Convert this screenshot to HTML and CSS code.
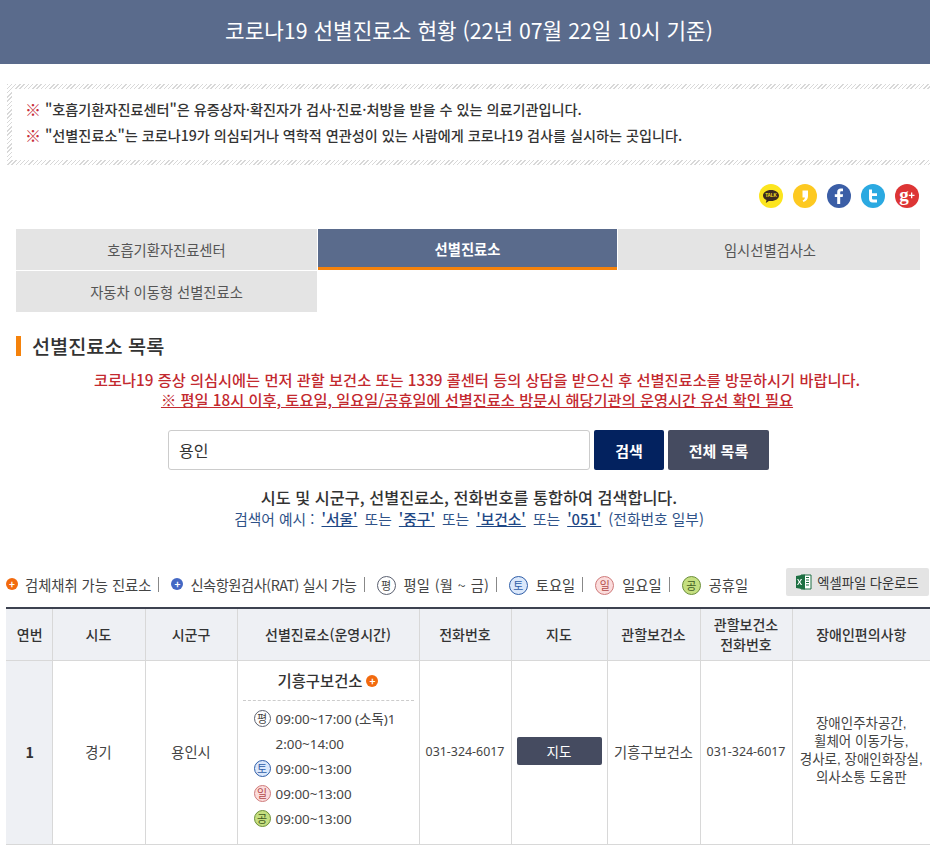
FILE: index.html
```html
<!DOCTYPE html>
<html lang="ko">
<head>
<meta charset="utf-8">
<title>코로나19 선별진료소 현황</title>
<link rel="stylesheet" href="styles.css">
</head>
<body>
<header class="top"><h1>코로나19 선별진료소 현황 (22년 07월 22일 10시 기준)</h1></header>
<section class="notice">
  <div class="notice-inner">
    <p><span class="mark">※</span>"호흡기환자진료센터"은 유증상자·확진자가 검사·진료·처방을 받을 수 있는 의료기관입니다.</p>
    <p><span class="mark">※</span>"선별진료소"는 코로나19가 의심되거나 역학적 연관성이 있는 사람에게 코로나19 검사를 실시하는 곳입니다.</p>
  </div>
</section>
<div class="share">
  <svg class="sns" viewBox="0 0 24 24"><circle cx="12" cy="12" r="12" fill="#fce51e"/><path d="M12 6c-4.600 0-8 2.500-8 5.500 0 2 1.400 3.700 3.500 4.600l-.7 3 3.100-2.200c.7.100 1.400.1 2.100.1 4.600 0 8-2.500 8-5.500S16.600 6 12 6z" fill="#3c2a20"/><text x="12" y="13.400" class="talk">TALK</text></svg>
  <svg class="sns" viewBox="0 0 24 24"><circle cx="12" cy="12" r="12" fill="#fdc921"/><path d="M9.500 6.500h5.500v5.500c0 2.800-1.500 5-4.500 6l-.9-1.600c1.500-.7 2.200-1.700 2.300-3h-2.400z" fill="#fff"/></svg>
  <svg class="sns" viewBox="0 0 24 24"><circle cx="12" cy="12" r="12" fill="#3b5ea6"/><path d="M13.200 20v-7h2.500l.4-2.800h-2.900V8.500c0-.8.300-1.300 1.400-1.300H16V4.700c-.3 0-1.200-.1-2.200-.1-2.200 0-3.600 1.300-3.600 3.700v1.900H7.800V13h2.400v7z" fill="#fff"/></svg>
  <svg class="sns" viewBox="0 0 24 24"><circle cx="12" cy="12" r="12" fill="#2ba9e1"/><path d="M8 5.500h3v3.700h5v2.800h-5v2c0 1 .6 1.500 1.500 1.500H16V18.500h-4.500C9.300 18.500 8 17 8 14.800z" fill="#fff"/></svg>
  <svg class="sns" viewBox="0 0 24 24"><circle cx="12" cy="12" r="12" fill="#dd3535"/><text x="9" y="16.500" class="gplus">g</text><path d="M16 8.500h1.300v2.200h2.200V12h-2.200v2.200H16V12h-2.200v-1.300H16z" fill="#fff"/></svg>
</div>
<nav class="tabs">
  <a class="tab">호흡기환자진료센터</a>
  <a class="tab active">선별진료소</a>
  <a class="tab">임시선별검사소</a>
  <a class="tab">자동차 이동형 선별진료소</a>
</nav>
<h2 class="section-title">선별진료소 목록</h2>
<div class="warn">
  <p>코로나19 증상 의심시에는 먼저 관할 보건소 또는 1339 콜센터 등의 상담을 받으신 후 선별진료소를 방문하시기 바랍니다.</p>
  <p><u>※ 평일 18시 이후, 토요일, 일요일/공휴일에 선별진료소 방문시 해당기관의 운영시간 유선 확인 필요</u></p>
</div>
<form class="search">
  <input class="search-input" type="text" value="용인">
  <button class="btn btn-navy" type="button">검색</button>
  <button class="btn btn-slate" type="button">전체 목록</button>
</form>
<div class="hint">
  <p class="hint-main">시도 및 시군구, 선별진료소, 전화번호를 통합하여 검색합니다.</p>
  <p class="hint-sub">검색어 예시 : <a>'서울'</a> 또는 <a>'중구'</a> 또는 <a>'보건소'</a> 또는 <a>'051'</a> (전화번호 일부)</p>
</div>
<div class="legend">
  <div class="legend-items">
    <span class="dot dot-orange">+</span><span class="lg-text">검체채취 가능 진료소</span><i class="sep"></i>
    <span class="dot dot-blue">+</span><span class="lg-text tight">신속항원검사(RAT) 실시 가능</span><i class="sep"></i>
    <span class="day day-w lg-day">평</span><span class="lg-text wide">평일 (월 ~ 금)</span><i class="sep"></i>
    <span class="day day-s lg-day">토</span><span class="lg-text">토요일</span><i class="sep"></i>
    <span class="day day-u lg-day">일</span><span class="lg-text">일요일</span><i class="sep"></i>
    <span class="day day-h lg-day">공</span><span class="lg-text">공휴일</span>
  </div>
  <a class="excel">
    <svg class="xl" viewBox="0 0 16 16"><path d="M5 1h10v14H5z" fill="#fff" stroke="#1d6f42"/><path d="M10 3.500h3M10 6h3M10 8.500h3M10 11h3" stroke="#1d6f42"/><path d="M0 2l9-1.500v15L0 14z" fill="#1d6f42"/><path d="M2.300 5l1.200 2.200L4.800 5h1.300L4.200 8l1.900 3H4.800L3.500 8.800 2.200 11H1L2.800 8 1.100 5z" fill="#fff"/></svg>
    엑셀파일 다운로드
  </a>
</div>
<table class="list">
  <colgroup>
    <col class="c1"><col class="c2"><col class="c3"><col class="c4"><col class="c5"><col class="c6"><col class="c7"><col class="c8"><col class="c9">
  </colgroup>
  <thead>
    <tr><th>연번</th><th>시도</th><th>시군구</th><th>선별진료소(운영시간)</th><th>전화번호</th><th>지도</th><th>관할보건소</th><th>관할보건소<br>전화번호</th><th>장애인편의사항</th></tr>
  </thead>
  <tbody>
    <tr>
      <th class="num">1</th>
      <td>경기</td>
      <td>용인시</td>
      <td class="clinic">
        <div class="clinic-name">기흥구보건소<span class="dot dot-orange name-dot">+</span></div>
        <div class="hours">
          <div class="hour"><span class="day day-w">평</span><span class="hour-text">09:00~17:00 (소독)12:00~14:00</span></div>
          <div class="hour"><span class="day day-s">토</span><span class="hour-text">09:00~13:00</span></div>
          <div class="hour"><span class="day day-u">일</span><span class="hour-text">09:00~13:00</span></div>
          <div class="hour"><span class="day day-h">공</span><span class="hour-text">09:00~13:00</span></div>
        </div>
      </td>
      <td class="phone">031-324-6017</td>
      <td><a class="map-btn">지도</a></td>
      <td>기흥구보건소</td>
      <td class="phone">031-324-6017</td>
      <td class="access">장애인주차공간,<br>휠체어 이동가능,<br>경사로, 장애인화장실,<br>의사소통 도움판</td>
    </tr>
  </tbody>
</table>
</body>
</html>
```

FILE: styles.css
```css
* { box-sizing: border-box; }
html, body { margin: 0; padding: 0; }
body {
  width: 930px;
  height: 845px;
  overflow: hidden;
  background: #fff;
  color: #333;
  font-family: "Noto Sans CJK KR", "Noto Sans", sans-serif;
  font-size: 14px;
}
p, h1, h2 { margin: 0; }

.top {
  height: 64px;
  padding: 0 0 6px 8px;
  background: #5a6b8c;
  display: flex;
  align-items: center;
  justify-content: center;
}
.top h1 { color: #fff; font-size: 21.300px; font-weight: 400; }

.notice {
  margin: 20px 0 0 7px;
  height: 81px;
  padding: 5px 0 5px 5px;
  background: repeating-linear-gradient(135deg, #d8d8d8 0 1px, #fff 1px 3px);
}
.notice-inner {
  height: 100%;
  background: #fff;
  padding: 7px 0 0 13px;
}
.notice p { font-size: 14.150px; font-weight: 500; line-height: 26px; color: #333; display: flex; align-items: center; }
.mark { color: #c8313c; font-size: 16px; width: 20px; font-weight: 400; }

.share {
  display: flex;
  justify-content: flex-end;
  gap: 10px;
  margin-top: 19px;
  padding-right: 11px;
  height: 24px;
}
.sns { width: 24px; height: 24px; display: block; }
.talk { font: 700 4.500px "Liberation Sans", sans-serif; fill: #fce51e; text-anchor: middle; }
.gplus { font: 700 19px "Liberation Serif", serif; fill: #fff; text-anchor: middle; }

.tabs {
  display: grid;
  grid-template-columns: 301px 301px 302px;
  gap: 1px 0;
  margin: 21px 0 0 16px;
  width: 904px;
}
.tab {
  height: 41px;
  background: #e4e4e4;
  color: #555;
  font-size: 14.300px;
  display: flex;
  align-items: center;
  justify-content: center;
}
.tab:nth-child(2) { margin-left: 1px; margin-right: 1px; }
.tab:nth-child(3) { padding-left: 2px; }
.tab.active {
  background: #5a6b8c;
  color: #fff;
  font-weight: 700;
  border-bottom: 3px solid #f5820b;
}

.section-title {
  margin: 24px 0 0 16px;
  padding-left: 11px;
  border-left: 5px solid #f5820b;
  font-size: 19.700px;
  font-weight: 500;
  line-height: 20px;
  color: #333;
}
.warn {
  margin-top: 13px;
  padding-left: 24px;
  text-align: center;
  color: #c3292f;
  font-size: 15.250px;
  font-weight: 500;
  line-height: 20px;
}

.search {
  display: flex;
  justify-content: center;
  gap: 4px;
  margin: 21px 0 0 7px;
}
.search-input {
  width: 422px;
  height: 40px;
  border: 1px solid #ccc;
  border-radius: 3px;
  padding: 0 10px;
  font: 400 16px "Noto Sans CJK KR", "Noto Sans", sans-serif;
  color: #333;
  outline: 0;
}
.btn {
  height: 40px;
  border: 0;
  border-radius: 2px;
  color: #fff;
  font: 700 15px "Noto Sans CJK KR", "Noto Sans", sans-serif;
  padding: 0;
}
.btn-navy { width: 70px; background: #03225f; }
.btn-slate { width: 101px; background: #454b60; }

.hint { text-align: center; margin-top: 15px; padding-left: 8px; }
.hint-main { font-size: 16.300px; font-weight: 500; line-height: 24px; color: #333; }
.hint-sub { font-size: 14.750px; line-height: 20px; color: #2f5288; }
.hint-sub a { font-weight: 500; color: #1e4785; text-decoration: underline; margin: 0 3px; }

.legend {
  display: flex;
  justify-content: space-between;
  align-items: flex-start;
  margin-top: 39px;
  padding-left: 6px;
}
.legend-items { display: flex; align-items: center; height: 32px; color: #444; font-size: 14.300px; }
.lg-text { margin-left: 7px; white-space: nowrap; }
.lg-text.tight { letter-spacing: -0.500px; }
.lg-text.wide { word-spacing: 1px; }
.sep { width: 1px; height: 15px; background: #888; margin: 0 12px 0 7px; }
.dot {
  width: 12px;
  height: 12px;
  border-radius: 50%;
  color: #fff;
  font-size: 10px;
  line-height: 11px;
  font-weight: 700;
  text-align: center;
  flex: none;
  display: inline-block;
}
.dot-orange { background: #f26a0e; }
.dot-blue { background: #4468c4; }
.day {
  width: 17px;
  height: 17px;
  border-radius: 50%;
  border: 1px solid;
  font-size: 11px;
  line-height: 14px;
  text-align: center;
  flex: none;
  display: inline-block;
}
.lg-day { width: 19px; height: 19px; line-height: 16px; margin-right: 1px; margin-top: 2px; }
.day-w { background: #fff; border-color: #5a6070; color: #444; }
.day-s { background: #dbe8fb; border-color: #2f5ea8; color: #2f5ea8; }
.day-u { background: #fbdcdc; border-color: #cf7b7b; color: #b24a4a; }
.day-h { background: #c5df80; border-color: #6c8f3a; color: #3f5a1e; }

.excel {
  width: 143px;
  height: 28px;
  margin-right: 1px;
  border-radius: 2px;
  background: #e4e4e4;
  color: #333;
  font-size: 13.300px;
  display: flex;
  align-items: center;
  justify-content: center;
  gap: 5px;
}
.xl { width: 16px; height: 16px; }

.list {
  margin: 7px 0 0 6px;
  width: 924px;
  table-layout: fixed;
  border-collapse: collapse;
  border-top: 2px solid #3d4250;
  color: #444;
  font-size: 14.300px;
}
.c1 { width: 46px; } .c2 { width: 93px; } .c3 { width: 92px; } .c4 { width: 182px; }
.c5 { width: 92px; } .c6 { width: 96px; } .c7 { width: 93px; } .c8 { width: 92px; } .c9 { width: 138px; }
.list th, .list td {
  border: 1px solid #d8d8d8;
  text-align: center;
  vertical-align: middle;
  padding: 0;
}
.list tbody th, .list tbody td { padding-bottom: 2px; }
.list thead th {
  height: 52px;
  background: #eef0f4;
  font-weight: 500;
  color: #333;
  line-height: 20px;
  font-size: 14px;
}
.list th:first-child, .list td:first-child { border-left: 0; padding-left: 2px; }
.list th:last-child, .list td:last-child { border-right: 0; }
.list .num { font-weight: 700; background: #eef0f4; color: #333; }
.list tbody tr { height: 184px; }
.list .phone { font-family: "Noto Sans", sans-serif; font-size: 12.400px; }

.list .clinic { padding: 0 5px; vertical-align: top; }
.clinic-name {
  font-size: 15.400px;
  font-weight: 500;
  color: #333;
  height: 40px;
  display: flex;
  align-items: center;
  justify-content: center;
  gap: 4px;
  border-bottom: 1px dashed #ccc;
}
.name-dot { margin-top: 2px; }
.hours { padding: 6px 14px 0 11px; }
.hour {
  display: flex;
  align-items: flex-start;
  gap: 5px;
  text-align: left;
  line-height: 25px;
  font-family: "Noto Sans", "Noto Sans CJK KR", sans-serif;
  font-size: 13.400px;
}
.hour .day { margin-top: 3px; font-family: "Noto Sans CJK KR", sans-serif; }
.hour-text { word-break: break-all; }

.map-btn {
  display: block;
  width: 85px;
  height: 28px;
  margin: 0 auto;
  line-height: 28px;
  border-radius: 2px;
  background: #454b60;
  color: #fff;
  font-size: 13.500px;
}
.list .access {
  line-height: 18px;
  font-family: "Liberation Sans", "Noto Sans CJK KR", sans-serif;
  font-size: 13.500px;
}
```
